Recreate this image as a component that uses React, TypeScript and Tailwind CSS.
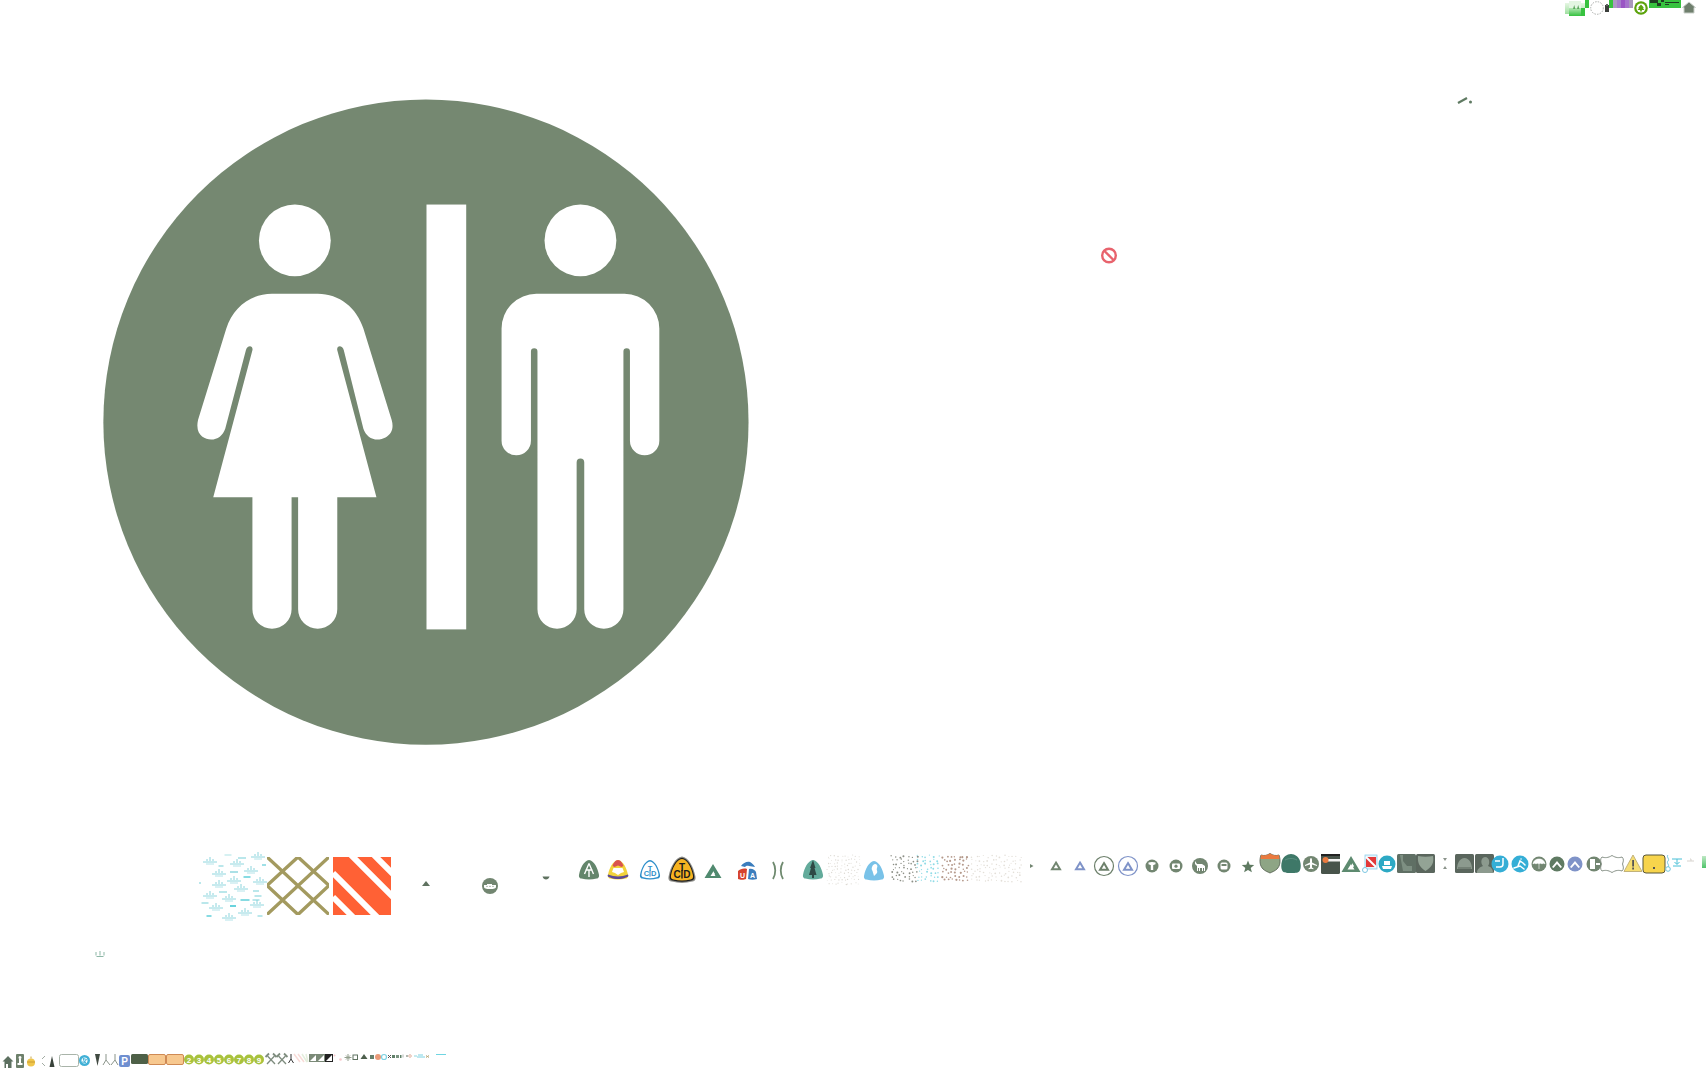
const SANS = "[font-family:'Liberation_Sans',Arial,sans-serif]";

function rnd(seed: number) {
  let s = seed;
  return () => {
    s = (s * 9301 + 49297) % 233280;
    return s / 233280;
  };
}

function dots(seed: number, x: number, y: number, w: number, h: number, step: number, fill: string, r = 0.8) {
  const R = rnd(seed);
  const out = [];
  for (let yy = y + 1; yy < y + h; yy += step) {
    for (let xx = x + 1; xx < x + w; xx += step) {
      out.push(<circle key={`${seed}-${xx}-${yy}`} cx={xx + R() * step * 0.7} cy={yy + R() * step * 0.7} r={r * (0.7 + R() * 0.5)} fill={fill} />);
    }
  }
  return out;
}

function Shield({ x, y, w, h, fill, stroke, sw = 0 }: { x: number; y: number; w: number; h: number; fill: string; stroke?: string; sw?: number }) {
  const l = x - w / 2, r = x + w / 2, t = y - h / 2, b = y + h / 2;
  return (
    <path
      d={`M${x} ${t} C${x + w * 0.26} ${t + h * 0.03} ${r - w * 0.07} ${b - h * 0.58} ${r - w * 0.01} ${b - h * 0.3} C${r + w * 0.03} ${b - h * 0.14} ${r - w * 0.03} ${b - h * 0.09} ${r - w * 0.12} ${b - h * 0.07} Q${x} ${b + h * 0.03} ${l + w * 0.12} ${b - h * 0.07} C${l + w * 0.03} ${b - h * 0.09} ${l - w * 0.03} ${b - h * 0.14} ${l + w * 0.01} ${b - h * 0.3} C${l + w * 0.07} ${b - h * 0.58} ${x - w * 0.26} ${t + h * 0.03} ${x} ${t}Z`}
      fill={fill}
      stroke={stroke}
      strokeWidth={sw}
    />
  );
}

function Tent({ x, y, s, c, sw = 2 }: { x: number; y: number; s: number; c: string; sw?: number }) {
  return <path d={`M${x} ${y - s * 0.62} L${x + s * 0.72} ${y + s * 0.58} H${x - s * 0.72}Z`} fill="none" stroke={c} strokeWidth={sw} strokeLinejoin="miter" />;
}

const GRAY = "#728671";

function TopStrip() {
  return (
    <svg className="absolute left-[1560px] top-0 w-[146px] h-[20px]" viewBox="1560 0 146 20">
      <defs>
        <linearGradient id="gTop" x1="0" y1="0" x2="0" y2="1">
          <stop offset="0" stopColor="#e6f6e4" />
          <stop offset="1" stopColor="#9fdf9f" />
        </linearGradient>
        <linearGradient id="gTop2" x1="0" y1="0" x2="0" y2="1">
          <stop offset="0" stopColor="#b5e8b5" />
          <stop offset="1" stopColor="#35c13f" />
        </linearGradient>
      </defs>
      <rect x="1565" y="3" width="20" height="11" fill="url(#gTop)" />
      <rect x="1569" y="1" width="12" height="7" fill="#e3f6e2" />
      <rect x="1569" y="8" width="16" height="8" fill="url(#gTop2)" />
      <path d="M1573 9l1.200-4 1.200 4zM1577 9l1.200-4 1.200 4z" fill="#5ea65f" />
      <rect x="1585" y="0" width="4" height="8" fill="#37c23f" />
      <rect x="1581" y="8" width="4" height="8" fill="#37c23f" />
      <circle cx="1597" cy="8" r="6.300" fill="none" stroke="#a9aca9" strokeWidth="1" strokeDasharray="1.500 1.200" />
      <rect x="1605" y="5" width="4" height="7" fill="#3b3f3b" />
      <rect x="1606" y="4" width="2" height="2" fill="#666" />
      <rect x="1609" y="0" width="4" height="8" fill="#37c23f" />
      <rect x="1613" y="0" width="4" height="8" fill="#ad98c4" />
      <rect x="1617" y="0" width="4" height="8" fill="#a77dcb" />
      <rect x="1621" y="0" width="4" height="8" fill="#9a55c4" />
      <rect x="1625" y="0" width="4" height="8" fill="#a673cc" />
      <rect x="1629" y="0" width="4" height="8" fill="#a998bc" />
      <circle cx="1641" cy="8" r="6.800" fill="#5ca30c" />
      <circle cx="1641" cy="8" r="4.600" fill="#fff" />
      <path d="M1641 4.500l3 3.300h-1.200l1.600 2.200h-2.600v1.500h-1.600V10h-2.600l1.600-2.200h-1.200z" fill="#5ca30c" />
      <rect x="1649" y="0" width="32" height="8" fill="#37c23f" />
      <path d="M1650 0h8v3h-8zM1657 3h4v3h-4zM1661 0h3v2h-3zM1665 2h14v1h-14zM1665 4h4v1h-4z" fill="#1f3d22" />
      <path d="M1689 2l6.500 5.500H1694V13h-10V7.500h-1.500z" fill="#6f7f6d" stroke="#c9cfc9" strokeWidth="1" />
    </svg>
  );
}

function Water() {
  const tufts: [number, number][] = [
    [210, 862], [237, 864], [258, 857], [219, 874], [251, 871], [234, 881], [219, 885], [260, 882],
    [241, 889], [210, 896], [229, 899], [257, 905], [216, 908], [245, 913], [229, 918],
  ];
  const bars: [number, number, number, string][] = [
    [228, 855, 7, "#c8ecee"], [242, 858, 8, "#a3dfe4"], [221, 866, 5, "#a3dfe4"], [264, 865, 4, "#7fd6df"],
    [234, 872, 8, "#8fd6de"], [247, 877, 7, "#5fcfd9"], [200, 883, 2, "#a3dfe4"], [223, 892, 8, "#a3dfe4"],
    [256, 891, 6, "#a3dfe4"], [245, 900, 9, "#5fcfd9"], [258, 896, 7, "#a3dfe4"], [205, 903, 7, "#a3dfe4"],
    [233, 906, 6, "#39c5d2"], [256, 900, 7, "#a3dfe4"], [209, 916, 5, "#5fcfd9"], [260, 916, 5, "#a3dfe4"],
  ];
  return (
    <g>
      {bars.map(([x, y, w, c], i) => (
        <path key={i} d={`M${x - w / 2} ${y}h${w}`} stroke={c} strokeWidth="1.500" />
      ))}
      {tufts.map(([x, y], i) => (
        <g key={i}>
          <path d={`M${x - 7} ${y}h14`} stroke="#8fd6de" strokeWidth="1" />
          <path d={`M${x - 3} ${y - 1}v-2M${x} ${y - 1}v-4M${x + 3} ${y - 1}v-2`} stroke="#7fcfd8" strokeWidth=".9" />
          <path d={`M${x - 4} ${y + 2}h8`} stroke="#bfe8ec" strokeWidth="1.200" />
        </g>
      ))}
    </g>
  );
}

function CTD({ x, y, s, c }: { x: number; y: number; s: number; c: string }) {
  return (
    <g fontWeight="700" fill={c} fontSize={s} textAnchor="middle">
      <text x={x} y={y - s * 0.05}>T</text>
      <rect x={x - s * 0.07} y={y - s * 0.1} width={s * 0.14} height={s * 0.85} />
      <text x={x - s * 0.48} y={y + s * 0.72}>C</text>
      <text x={x + s * 0.48} y={y + s * 0.72}>D</text>
    </g>
  );
}

function MiddleStrip() {
  return (
    <svg className={`absolute left-[190px] top-[845px] w-[1516px] h-[90px] ${SANS}`} viewBox="190 845 1516 90">
      <defs>
        <clipPath id="redClip"><rect x="333" y="857" width="58" height="58" /></clipPath>
        <clipPath id="latClip"><rect x="267" y="857" width="62" height="58" /></clipPath>
        <linearGradient id="gEdge" x1="0" y1="0" x2="0" y2="1">
          <stop offset="0" stopColor="#bfe8c4" />
          <stop offset="1" stopColor="#4fc46a" />
        </linearGradient>
      </defs>
      <Water />
      <g clipPath="url(#latClip)">
        <path d="M267 857L329 914.500M329 857L267 914.500M298 857L267 885.500L298 914.500L329 885.500Z" fill="none" stroke="#a39a5f" strokeWidth="3.400" />
      </g>
      <rect x="333" y="857" width="58" height="58" fill="#ff6135" />
      <g clipPath="url(#redClip)" stroke="#fff" strokeWidth="6">
        <path d="M349 853L395 899M333 873L378 918M372 853L395 876M333 897L353 917" />
      </g>
      <path d="M426 881l4 5h-8z" fill="#5f7260" />
      <circle cx="490" cy="886" r="8" fill={GRAY} />
      <path d="M484 885h12v2c0 1.500-2 2-6 2s-6-.5-6-2z" fill="#fff" />
      <path d="M487 884h5v1h-5z" fill="#fff" />
      <circle cx="487" cy="886.300" r=".6" fill={GRAY} /><circle cx="490" cy="886.300" r=".6" fill={GRAY} /><circle cx="493" cy="886.300" r=".6" fill={GRAY} />
      <path d="M542.500 876.500h7c-.5 2-2 3-3.500 3s-3-1-3.500-3z" fill="#5f7260" />

      <Shield x={589} y={870} w={20} h={20} fill="#64866c" />
      <path d="M589 863.500l4.500 10.500M589 863.500l-4.500 10.500M585.500 870h7M589 870v7" stroke="#fff" strokeWidth="1.400" fill="none" />

      <Shield x={618} y={870} w={20} h={20} fill="#f2d33b" />
      <path d="M612.500 866c1-3 3-6 5.500-6s4.500 3 5.500 6l-2 1-3.500-1.500-3.500 1.500z" fill="#d9534f" />
      <path d="M613.500 868h9l1.500 4-3 1-3 2-3-2-3-1z" fill="#fff" />
      <path d="M608 874.500c3 1 7 2 10 2s7-1 10-2c1 2 0 2.500-2 3-5 2-11 2-16 0-2-.5-3-1-2-3z" fill="#5c4a94" />

      <Shield x={650} y={870} w={20} h={20} fill="#2f8fca" />
      <Shield x={650} y={870} w={17} h={17} fill="#fff" />
      <CTD x={650} y={871} s={7.500} c="#2f8fca" />

      <Shield x={682} y={870} w={27} h={27} fill="#8f8f8a" />
      <Shield x={682} y={870} w={24.500} h={24.500} fill="#1e1e1e" />
      <Shield x={682} y={870} w={22} h={22} fill="#f6b321" />
      <CTD x={682} y={871} s={10} c="#1c1c1c" />

      <path d="M713 864l8.500 14h-17zM713 872l-2.500 4h5z" fill="#508a6f" fillRule="evenodd" />
      <path d="M713 871l2 3-2 2z" fill="#fff" />

      <path d="M738 871c2-2 6-3 9-2l-1 10c-2 1-6 1-8 0z" fill="#d6432f" />
      <path d="M749 869c3-1 6 1 7 3l1 7c-3 1-6 1-9 0z" fill="#3b7dbd" />
      <path d="M741 866c2-3 6-5 9-4 2 1 4 3 5 5l-6-1c-2-.5-3 0-4 1z" fill="#3b7dbd" />
      <text x={742.500} y={877.500} textAnchor="middle" fontSize="7" fontWeight="700" fill="#fff">U</text>
      <text x={752.500} y={877.500} textAnchor="middle" fontSize="7" fontWeight="700" fill="#fff">A</text>

      <path d="M773 862c3 5 3 12 0 17M783 862c-3 5-3 12 0 17" fill="none" stroke="#6f8a6f" strokeWidth="1.800" />

      <Shield x={813} y={870} w={20} h={20} fill="#63ab9b" />
      <path d="M813 860l2.500 8-1 0 2 7h-2.500v3h-2v-3H809l2-7h-1z" fill="#2f4a45" />

      {dots(11, 826, 854, 32, 31, 3.400, "#dcd9d2", 0.6)}
      <Shield x={874} y={871} w={20} h={20} fill="#79c2e8" />
      <path d="M875 864c2 0 3 2 2 4s1 3 0 5l-3 3c-1-3-1-4-2-6s1-6 3-6z" fill="#fff" />

      {dots(21, 890, 854, 26, 26, 4, "#8c8f86", 0.85)}
      {dots(22, 916, 854, 25, 26, 4, "#8fdbe6", 0.85)}
      {dots(23, 941, 854, 29, 26, 4, "#b59a8c", 0.95)}
      {dots(24, 970, 854, 50, 26, 4, "#e3dfd8", 0.75)}

      <path d="M1030 864l3.500 2-3.500 2z" fill={GRAY} />
      <Tent x={1056} y={866} s={5.500} c={GRAY} />
      <Tent x={1080} y={866} s={5.500} c="#7f93c8" />
      <circle cx="1104" cy="866" r="9.500" fill="none" stroke="#6d806b" strokeWidth="1.200" />
      <Tent x={1104} y={866.500} s={5.500} c="#6d806b" />
      <circle cx="1128" cy="866" r="9.500" fill="none" stroke="#7f93c8" strokeWidth="1.200" />
      <Tent x={1128} y={866.500} s={5.500} c="#7f93c8" />

      <circle cx="1152" cy="866" r="6.500" fill={GRAY} />
      <path d="M1148.500 862.500c2-.8 5-.8 7 0v1.800c-1 .6-1.800.7-2.300.7v5h-2.400v-5c-.5 0-1.300-.1-2.300-.7z" fill="#fff" />
      <circle cx="1176" cy="866" r="6.500" fill={GRAY} />
      <rect x="1172" y="863.500" width="8" height="5.500" rx="1" fill="#fff" />
      <circle cx="1176" cy="866.200" r="1.600" fill={GRAY} />
      <circle cx="1200" cy="866" r="8" fill={GRAY} />
      <path d="M1195 861l2 3h5l3 2v5h-1v-3l-1 0v3h-1v-3h-2v3h-1v-3h-1v3h-1v-5l-2-2z" fill="#fff" />
      <circle cx="1224" cy="866" r="6.500" fill={GRAY} />
      <rect x="1220.500" y="862.500" width="7" height="7" rx="1.500" fill="#fff" />
      <rect x="1221.500" y="864" width="5" height="2" fill={GRAY} />
      <path d="M1248 860.500l1.700 4.200 4.500.3-3.500 2.900 1.200 4.400-3.900-2.400-3.900 2.400 1.200-4.400-3.500-2.900 4.500-.3z" fill="#5f7a62" />

      <path d="M1261 855c3 1 6 .5 9-1.500 3 2 6 2.500 9 1.500 2 6 1 11-2 14-2 2-5 3-7 4-2-1-5-2-7-4-3-3-4-8-2-14z" fill="#8ea585" stroke="#4f5a4b" strokeWidth=".8" />
      <path d="M1261 855c3 1 6 .5 9-1.500 3 2 6 2.500 9 1.500l.5 4h-19z" fill="#ea7a3f" />
      <path d="M1291 854c4 0 8 3 9 7 1 3 1 7 0 9-1 3-4 3-9 3s-8 0-9-3c-1-2-1-6 0-9 1-4 5-7 9-7z" fill="#3e7868" />
      <path d="M1285 860c4-2 8-2 12 0" fill="none" stroke="#6f9f92" strokeWidth=".6" />
      <circle cx="1311" cy="864" r="8" fill={GRAY} />
      <path d="M1311 858c.7 0 1 1 1 2v2.500l5 2.500v1l-5-1.500v3l1.500 1v.8l-2.500-.6-2.500.6v-.8l1.500-1v-3l-5 1.500v-1l5-2.500V860c0-1 .3-2 1-2z" fill="#fff" />
      <rect x="1321" y="854" width="19" height="20" rx="1.500" fill="#48544b" />
      <rect x="1321" y="854" width="19" height="2" fill="#222" />
      <rect x="1325" y="859" width="15" height="2.500" fill="#f3f3f3" />
      <circle cx="1325.500" cy="860" r="3" fill="#ea7a3f" />
      <path d="M1351 856l9.500 16h-19zM1351 864l-3.500 5.500h7z" fill="#5d8a6f" fillRule="evenodd" />
      <path d="M1352 863l2 3-2 3z" fill="#fff" />

      <rect x="1365" y="855" width="12" height="14" fill="#e6f4fa" stroke="#8fd0ea" strokeWidth=".8" />
      <rect x="1366" y="857" width="10" height="10" fill="#e23a3a" />
      <path d="M1366 857l10 10" stroke="#fff" strokeWidth="2" />
      <circle cx="1365" cy="870" r="2.500" fill="#fff" stroke="#7cc7e3" strokeWidth="1" />
      <circle cx="1387" cy="864" r="8.500" fill="#2da9c4" />
      <path d="M1382 866h10l-1 3h-8zM1384 861h6v4h-6z" fill="#fff" />
      <rect x="1397" y="854" width="19" height="19" rx="1.500" fill="#5f6f64" />
      <path d="M1400 855h3v6l4 5h5v5h-9z" fill="#7d8f82" />
      <rect x="1416" y="854" width="19" height="19" rx="1.500" fill="#5a665d" />
      <path d="M1418 856c5 1 10 1 15 0 1 6 0 10-7.500 15-7-5-8-9-7.500-15z" fill="#93a395" />
      <path d="M1443 858h4l-2 3z" fill="#8b948b" /><path d="M1445 866l2 3h-4z" fill="#8b948b" />
      <rect x="1455" y="854" width="19" height="19" rx="1.500" fill="#5a665d" />
      <path d="M1457 869c0-6 3-11 7.500-11s7.500 5 7.500 11z" fill="#8c9a8e" />
      <path d="M1458 868h13" stroke="#5a665d" strokeWidth="1" />
      <rect x="1475" y="854" width="19" height="19" rx="1.500" fill="#5a665d" />
      <path d="M1477 873c0-4 3-6 6-7-2-2-3-8 2-9 5 0 5 7 3 9 3 1 5 3 5 7z" fill="#8c9a8e" />
      <circle cx="1500" cy="864" r="8.500" fill="#35aed6" />
      <path d="M1503 858v6c0 2-1 3-3 3h-4M1495 861h5" fill="none" stroke="#fff" strokeWidth="1.500" />
      <circle cx="1520" cy="864" r="8.500" fill="#35aed6" />
      <path d="M1514 868l6-2 4 3M1518 866l2-5 3 2 2 2M1521 859l.1 0" fill="none" stroke="#fff" strokeWidth="1.500" strokeLinecap="round" />
      <circle cx="1539" cy="864" r="7.500" fill={GRAY} />
      <path d="M1533 864c.5-3.500 3-5 6-5s5.500 1.500 6 5c-1-1-2-1-3 0-1-1-2-1-3 0-1-1-2-1-3 0-1-1-2-1-3 0zM1539 864v5" fill="#fff" stroke="#fff" strokeWidth=".6" />
      <circle cx="1557" cy="864" r="7.500" fill="#5f7a62" />
      <path d="M1552 867l5-6 5 6-1.500 1-3.500-4-3.500 4z" fill="#fff" />
      <circle cx="1575" cy="864" r="7.500" fill="#7f93c8" />
      <path d="M1570 867l5-6 5 6-1.500 1-3.500-4-3.500 4z" fill="#fff" />
      <circle cx="1594" cy="864" r="7.500" fill={GRAY} />
      <path d="M1590 859h5v10h-5zM1596 863h4v2h-4z" fill="#fff" />
      <path d="M1602 857c3 1 6 1 10-1.500 4 2.500 7 2.500 10 1.500 2 2 1.500 4 .5 7 1 3 1.500 5-.5 7-3-1-6-1-10 1.500-4-2.500-7-2.500-10-1.500-2-2-1.500-4-.5-7-1-3-1.500-5 .5-7z" fill="#fff" stroke="#7a867a" strokeWidth=".9" />
      <path d="M1633 855l9 16.500h-18z" fill="#f6de73" stroke="#c2b27a" strokeWidth="1" />
      <rect x="1632.200" y="860" width="1.800" height="6.500" fill="#555" /><rect x="1632.200" y="867.500" width="1.800" height="2" fill="#555" />
      <rect x="1643" y="855" width="22" height="18" rx="3" fill="#f7d44c" stroke="#57563a" strokeWidth="1" />
      <rect x="1653" y="867" width="2" height="2" fill="#555" />
      <path d="M1668 855c-2 2 2 4 0 6s2 4 0 6" fill="none" stroke="#6ec7de" strokeWidth="1" />
      <circle cx="1668" cy="869" r="2.300" fill="#fff" stroke="#6ec7de" strokeWidth="1" />
      <path d="M1672 859h10M1677 859v5M1674.500 862l2.500 2.500 2.500-2.500M1673 866h8" fill="none" stroke="#47bfd6" strokeWidth="1" />
      <path d="M1687 861h7M1690 859h1v2" stroke="#d7d3ce" strokeWidth="1" fill="none" />
      <rect x="1702" y="856" width="4" height="12" fill="url(#gEdge)" />
    </svg>
  );
}

function Hammers({ x }: { x: number }) {
  return (
    <g stroke="#7f8d7f" fill="none">
      <path d={`M${x - 3.500} ${1056}l7.500 8M${x + 3.500} ${1056}l-7.500 8`} strokeWidth="1.300" />
      <path d={`M${x - 5.500} ${1057}l3.500-3.500M${x + 5.500} ${1057}l-3.500-3.500`} strokeWidth="1.800" />
    </g>
  );
}

function BottomStrip() {
  const nums = [2, 3, 4, 5, 6, 7, 8, 9];
  return (
    <svg className={`absolute left-0 top-[1045px] w-[460px] h-[24px] ${SANS}`} viewBox="0 1045 460 24">
      <path d="M8 1056l5.500 5.500h-2V1068H8v-4H6v4H4.500v-6.500H2.500z" fill="#5d7060" />
      <rect x="16" y="1054" width="8" height="14" rx="1" fill="#6d806b" />
      <path d="M20 1056a1.500 1.500 0 1 1 0 3 1.500 1.500 0 1 1 0-3zM19 1059h2v4h1.500v2h-5v-2H19z" fill="#fff" />
      <circle cx="31" cy="1062.500" r="4" fill="#f0c64b" />
      <rect x="27" y="1061.500" width="8" height="1" fill="#c99b34" />
      <path d="M31 1056.500v2" stroke="#c9a64a" strokeWidth="1" />
      <path d="M45 1056l-3 3M42 1063l3 3" stroke="#a3aca3" strokeWidth="1" fill="none" />
      <path d="M52 1056l2.500 11h-5z" fill="#39433b" />
      <rect x="59.500" y="1054.500" width="19" height="12" rx="2" fill="#fff" stroke="#a9b4a9" strokeWidth="1" />
      <circle cx="84.500" cy="1060.500" r="5.500" fill="#41b0d6" />
      <circle cx="84.500" cy="1060.500" r="3" fill="#fff" />
      <path d="M83 1058.500l3.500 1-2 2.500zM82 1062l4 .5" stroke="#41b0d6" fill="none" strokeWidth="1" />
      <path d="M95 1054h5l-2.500 12z" fill="#414a42" />
      <path d="M106 1054v6l-3 5M106 1060l4 5M115 1054v6l-4 5M115 1060l3 5" fill="none" stroke="#8a948a" strokeWidth="1" />
      <rect x="119" y="1055" width="11" height="12" rx="2" fill="#6f8fd0" />
      <text x={124.500} y={1065} textAnchor="middle" fontSize="10" fontWeight="700" fill="#fff">P</text>
      <rect x="131" y="1054" width="17" height="10" rx="1.500" fill="#4e6047" />
      <rect x="148.500" y="1054.500" width="17" height="10" rx="1.500" fill="#f7c88f" stroke="#cf8a54" strokeWidth="1" />
      <rect x="166.500" y="1054.500" width="17" height="10" rx="1.500" fill="#f7c88f" stroke="#cf8a54" strokeWidth="1" />
      {nums.map((n, i) => (
        <g key={n}>
          <circle cx={189 + i * 10} cy={1059.500} r={5} fill="#a8c23c" />
          <text x={189 + i * 10} y={1062.500} textAnchor="middle" fontSize="8" fontWeight="700" fill="#fff">{n}</text>
        </g>
      ))}
      <Hammers x={271} />
      <Hammers x={282} />
      <path d="M291 1054v5l-2.500 4M291 1059l2.500 4" stroke="#333" strokeWidth="1" fill="none" />
      <g stroke="#f8dcd8" strokeWidth="1.500"><path d="M294 1054l6 8M298 1054l6 8" /></g>
      <g stroke="#e4eedd" strokeWidth="1.500"><path d="M302 1054l5 8M306 1054l2 8" /></g>
      <rect x="309" y="1054" width="8" height="8" fill="#7b8a78" /><path d="M310 1061l6-6v6z" fill="#fff" />
      <rect x="317" y="1054" width="8" height="8" fill="#7b8a78" /><path d="M318 1061l6-6v6z" fill="#fff" />
      <rect x="325" y="1054" width="8" height="8" fill="#222" /><path d="M326 1061l6-6v6z" fill="#fff" />
      <circle cx="334.500" cy="1055.500" r="1" fill="#f8c8cc" /><circle cx="340.500" cy="1059.500" r="1.300" fill="#f8c8cc" />
      <path d="M348 1054v7M344.500 1057.500h7M346 1055.500l4 4M350 1055.500l-4 4" stroke="#94a08e" strokeWidth="1" />
      <rect x="353" y="1055" width="4.500" height="4.500" fill="none" stroke="#5f7260" strokeWidth="1" />
      <path d="M364 1054l3.500 5h-7z" fill="#4d5f4c" />
      <rect x="370" y="1055" width="4" height="4" fill="#66806c" />
      <circle cx="378" cy="1057" r="3" fill="#ea9a78" />
      <circle cx="384" cy="1057" r="2.500" fill="none" stroke="#7dd2e2" strokeWidth="1.200" />
      <path d="M388 1055l3 3M391 1055l-3 3" stroke="#555" strokeWidth="1" />
      <rect x="392" y="1055" width="3" height="3" fill="#5f7f68" /><rect x="396" y="1055" width="3" height="3" fill="#7a9480" />
      <rect x="400" y="1055" width="1.500" height="3" fill="#5f7f68" />
      <path d="M403 1054.500v3M406 1055l2 2M408 1055l-2 2" stroke="#b0b8b0" strokeWidth="1" />
      <circle cx="410" cy="1056" r="1.300" fill="none" stroke="#dca58f" strokeWidth=".8" />
      <path d="M414 1056h3" stroke="#8fd6de" strokeWidth="1" />
      <path d="M418 1055h5M417 1057h8" stroke="#7dd2e2" strokeWidth="1" />
      <path d="M426 1055.500l3 2M429 1055.500l-3 2" stroke="#b8a87a" strokeWidth="1" />
      <path d="M436 1054.500h10" stroke="#6fd5e2" strokeWidth="1" />
    </svg>
  );
}

export default function App() {
  return (
    <div className="relative w-[1706px] h-[1069px] overflow-hidden bg-white">
      <svg className="absolute left-0 top-0 w-[800px] h-[800px]" viewBox="0 0 735.300 735.300">
        <circle cx="391.500" cy="388" r="296.500" fill="#758871" />
        <circle cx="271" cy="221" r="33" fill="#fff" />
        <circle cx="533.500" cy="221" r="33" fill="#fff" />
        <rect x="392" y="188" width="36.500" height="390.500" fill="#fff" />
        <path
          fill="#fff"
          d="M250 270H292C312 270 328 283 334 302L360 386C364 400 352 404 347 404C341 404 336 400 334 394L316 322C315 317 309 317 310 322L346 457H310V560A18 18 0 0 1 274 560V457H268V560A18 18 0 0 1 232 560V457H196L232 322C233 317 227 317 226 322L207 394C205 400 200 404 194 404C188 404 179 400 182 386L208 302C214 283 230 270 250 270Z"
        />
        <path
          fill="#fff"
          d="M493 270H574A32 32 0 0 1 606 302V405A13.500 13.500 0 0 1 579 405V323A3 3 0 0 0 573 323V560A18 18 0 0 1 537 560V425A3.500 3.500 0 0 0 530 425V560A18 18 0 0 1 494 560V323A3 3 0 0 0 488 323V405A13.500 13.500 0 0 1 461 405V302A32 32 0 0 1 493 270Z"
        />
      </svg>

      <TopStrip />

      <svg className="absolute left-[1450px] top-[90px] w-[40px] h-[20px]" viewBox="1450 90 40 20">
        <path d="M1458 103l9-5" stroke="#5f7a62" strokeWidth="2.200" />
        <circle cx="1470.500" cy="102" r="1.500" fill="#5f7a62" />
      </svg>
      <svg className="absolute left-[1090px] top-[240px] w-[40px] h-[30px]" viewBox="1090 240 40 30">
        <circle cx="1109" cy="255.500" r="6.800" fill="none" stroke="#e8636d" strokeWidth="2.400" />
        <path d="M1104.500 251l9 9" stroke="#e8636d" strokeWidth="2.400" />
      </svg>
      <svg className="absolute left-[85px] top-[945px] w-[30px] h-[20px]" viewBox="85 945 30 20">
        <path d="M96 952v3.500M100 951v4.500M104 952v3.500M96.500 956.500h7" stroke="#8db7a6" strokeWidth="1" fill="none" />
      </svg>

      <MiddleStrip />
      <BottomStrip />
    </div>
  );
}
